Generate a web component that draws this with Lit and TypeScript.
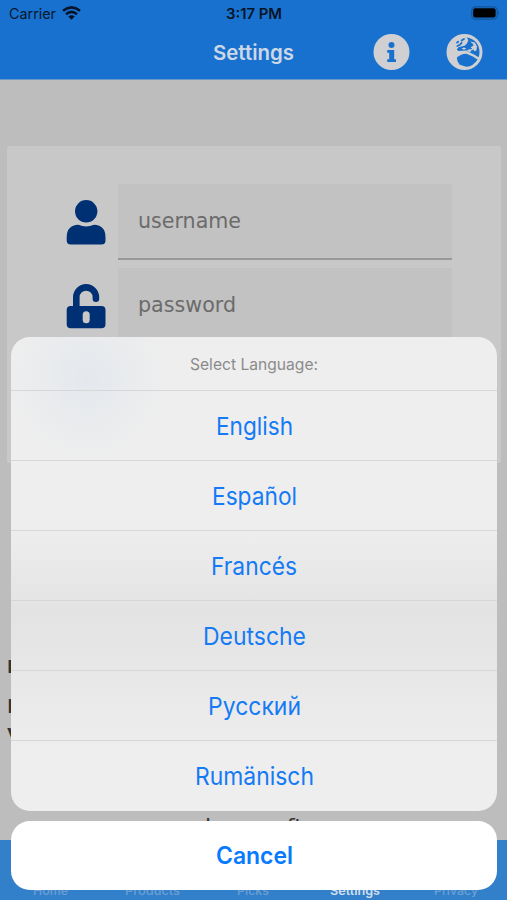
import { LitElement, html, css, svg } from "lit";
import { customElement } from "lit/decorators.js";

const LANGUAGES = [
  { label: "English", width: 77 },
  { label: "Español", width: 85 },
  { label: "Francés", width: 86 },
  { label: "Deutsche", width: 103 },
  { label: "Русский", width: 93 },
  { label: "Rumänisch", width: 119 },
];

const TABS = [
  { label: "Home", width: 35 },
  { label: "Products", width: 55 },
  { label: "Picks", width: 32 },
  { label: "Settings", width: 50 },
  { label: "Privacy", width: 44 },
];

// A run of text set to an exact advance width.
const fit = (text: string, width: number, size: number, weight = 400) => html`
  <svg class="fit" width=${width} height=${size * 1.4} aria-label=${text}>
    ${svg`<text x="0" y=${size * 1.06} font-size=${size} font-weight=${weight} textLength=${width} lengthAdjust="spacingAndGlyphs">${text}</text>`}
  </svg>`;

const fitStyles = css`
  .fit { display: block; overflow: visible; fill: currentColor; }
`;

@customElement("status-bar")
class StatusBar extends LitElement {
  static styles = [fitStyles, css`
    :host { display: grid; grid-template-columns: 1fr auto 1fr; align-items: center; height: 27px; padding: 0 6px 0 9px; color: #06182d; }
    .left { display: flex; align-items: center; gap: 6px; padding-top: 1px; }
    .left svg + svg { margin-bottom: 2px; }
    .right { display: flex; justify-content: flex-end; }
    .right svg { margin-top: -1px; }
    .time { color: #051427; padding-top: 1px; margin-left: -3px; }
  `];
  render() {
    return html`
      <div class="left">
        ${fit("Carrier", 47, 14.5)}
        <svg width="19" height="14" viewBox="0 0 19 14" fill="none" stroke="#051427">
          <path d="M1 4.8Q9.5 -2 18 4.8" stroke-width="2.6" />
          <path d="M4 8.2Q9.5 3.6 15 8.2" stroke-width="2.5" />
          <path d="M6.3 10.6Q9.5 7.9 12.7 10.6L9.5 13.8Z" fill="#051427" stroke="none" />
        </svg>
      </div>
      <div class="time">${fit("3:17 PM", 56, 14.2, 600)}</div>
      <div class="right">
        <svg width="30" height="14" viewBox="0 0 30 14">
          <rect x=".8" y=".8" width="25.4" height="12.4" rx="3.6" fill="none" stroke="#11549b" stroke-width="1.2" />
          <rect x="2.2" y="2.2" width="22.4" height="9.4" rx="2" fill="#000" />
          <path d="M27.4 4.8q2 2.1 0 4.2z" fill="#11549b" />
        </svg>
      </div>`;
  }
}

@customElement("title-bar")
class TitleBar extends LitElement {
  static styles = [fitStyles, css`
    :host { display: grid; grid-template-columns: 1fr auto 1fr; align-items: center; height: 50px; color: #ccd8e6; }
    .icons { display: flex; justify-content: flex-end; gap: 36px; padding-right: 24px; }
    .icons svg { display: block; }
  `];
  render() {
    return html`
      <span></span>
      ${fit("Settings", 81, 20.5, 600)}
      <div class="icons">
        <svg width="37" height="37" viewBox="0 0 37 37">
          <circle cx="18.5" cy="18" r="18" fill="#d0d0d2" />
          <circle cx="18.5" cy="11" r="3" fill="#1971cf" />
          <path d="M14.2 16h7v9.2h1.8v2.8h-8.8v-2.8h2v-6.4h-2z" fill="#1971cf" />
        </svg>
        <svg width="37" height="37" viewBox="0 0 37 37">
          <circle cx="18.5" cy="18" r="18" fill="#d0d0d2" />
          <path d="M20.5 3.6C28 4.4 33.5 10 33.5 18Q33.5 21 32.6 23.2L28 20.4L23.8 18.6L20 16.4L12.4 17L10.8 15.5L12.4 13.2L15.2 12.4L18.6 11.8L21 9.6L22.4 6Z" fill="#1971cf" />
          <path d="M24 7.4L28.8 8.6L31 12.6L30.4 16.6L27.8 17.2L28 15.4L25.4 16.2L24 18.6L20.4 16.2L23 15.6L26.4 15L24.6 13.2L27.6 11.6L26.6 9.4Z" fill="#d0d0d2" />
          <path d="M15.4 14.6L18 13.6L20.4 14.6L18 15.8Z" fill="#d0d0d2" />
          <path d="M10.8 23.6Q15 19.9 20.4 19.8L26.2 22.2L31.6 25.4Q27.6 32 20.4 32.8L17 31.8L13.4 30.4Q10.8 27.6 10.8 23.6Z" fill="#1971cf" />
          <path d="M11 8.6L12.2 7.6M15.6 6.6L18 4.9M11.4 12L13.8 10.8L15.6 8.8" stroke="#1971cf" stroke-width="1.8" stroke-linecap="round" fill="none" />
        </svg>
      </div>`;
  }
}

@customElement("login-card")
class LoginCard extends LitElement {
  static styles = [fitStyles, css`
    :host { display: flex; flex-direction: column; gap: 8px; box-sizing: border-box; height: 317px; margin: 67px 6px 0 7px; padding: 38px 49px 0 59px; background: #c8c8c8; border-radius: 2px; }
    .row { display: grid; grid-template-columns: 40px 334px; gap: 12px; align-items: center; height: 76px; }
    .icon { display: block; fill: #003074; margin-top: -1px; }
    .field { display: flex; align-items: center; box-sizing: border-box; height: 76px; padding: 0 20px 1px; background: #c2c2c2; border-bottom: 2px solid #989898; color: #6b6b6b; font-family: "DejaVu Sans", sans-serif; }
  `];
  render() {
    return html`
      <div class="row">
        <svg class="icon" width="40" height="46" viewBox="0 0 40 46">
          <circle cx="20.2" cy="12.3" r="11.2" />
          <path d="M12.4 25.8Q20 29 28 25.8Q39.5 26.3 39.5 38.3V41.5Q39.5 45.5 35.5 45.5H4.7Q.7 45.5 .7 41.5V38.3Q.7 26.3 12.4 25.8Z" />
        </svg>
        <div class="field">${fit("username", 103, 21.5)}</div>
      </div>
      <div class="row">
        <svg class="icon" width="40" height="46" viewBox="0 0 40 46">
          <path d="M10.3 25V14.2a9.8 9.8 0 0 1 19.6 0v1.6" fill="none" stroke="#003074" stroke-width="6.6" stroke-linecap="round" />
          <path fill-rule="evenodd" d="M4.7 23H35.5Q39.5 23 39.5 27V41.3Q39.5 45.3 35.5 45.3H4.7Q.7 45.3 .7 41.3V27Q.7 23 4.7 23ZM20.2 28.2a3.5 3.5 0 0 0-3.5 3.5v5a3.5 3.5 0 0 0 7 0v-5a3.5 3.5 0 0 0-3.5-3.5Z" />
        </svg>
        <div class="field">${fit("password", 98, 21.5)}</div>
      </div>`;
  }
}

@customElement("tab-bar")
class TabBar extends LitElement {
  static styles = [fitStyles, css`
    :host { display: grid; grid-template-columns: repeat(5, 1fr); align-items: end; height: 60px; background: #3380ca; color: #6b9fd3; }
    .tab { display: grid; justify-items: center; padding-bottom: 1px; }
    .active { color: #d2dfed; }
  `];
  render() {
    return TABS.map((t) => {
      const active = t.label === "Settings";
      return html`<div class="tab ${active ? "active" : ""}">${fit(t.label, t.width, 12, active ? 600 : 500)}</div>`;
    });
  }
}

@customElement("language-sheet")
class LanguageSheet extends LitElement {
  static styles = [fitStyles, css`
    :host { display: flex; flex-direction: column; gap: 10px; color: #147bf5; }
    .panel { box-sizing: border-box; height: 474px; border-radius: 19px; overflow: hidden; background: radial-gradient(ellipse 80px 85px at 76px 42px, #e4e8ed, #e4e8ed00), linear-gradient(#eee 0 190px, #e3e3e3 275px, #e7e7e7 330px, #eee 420px); }
    .title { display: grid; place-items: center; height: 53px; padding-top: 1px; box-sizing: border-box; color: #8b8b8b; }
    .item { display: grid; place-items: center; box-sizing: border-box; height: 70px; padding-top: 1px; border-top: 1px solid #d7d7d7; }
    .cancel { display: grid; place-items: center; box-sizing: border-box; height: 69px; padding-top: 1px; border-radius: 19px; background: #fff; color: #077aff; }
  `];
  render() {
    return html`
      <div class="panel">
        <div class="title">${fit("Select Language:", 128, 16)}</div>
        ${LANGUAGES.map((l) => html`<div class="item">${fit(l.label, l.width, 24.5)}</div>`)}
      </div>
      <div class="cancel">${fit("Cancel", 77, 24, 600)}</div>`;
  }
}

@customElement("app-root")
class AppRoot extends LitElement {
  static styles = [fitStyles, css`
    :host { display: block; position: relative; width: 507px; height: 900px; overflow: hidden; background: #bdbdbd; font-family: Inter, "Liberation Sans", sans-serif; }
    .page { display: flex; flex-direction: column; height: 900px; }
    .top { box-sizing: border-box; height: 80px; background: #1971cf; border-bottom: 1px solid #6a99c9; margin-bottom: -1px; }
    .copy { flex: 1; min-height: 0; box-sizing: border-box; display: flex; flex-direction: column; padding: 192px 7px 0; color: #333; font: bold 18px/24px "DejaVu Sans", sans-serif; }
    .line { flex: none; height: 24px; }
    .first { font-size: 17px; }
    .second { margin-top: 15px; font-size: 20px; }
    .third { margin-top: 2px; }
    .version { display: grid; justify-items: center; margin-top: 68px; font-weight: 400; }
    .sheet { position: absolute; left: 11px; right: 10px; top: 337px; }
  `];
  render() {
    return html`
      <div class="page">
        <div class="top">
          <status-bar></status-bar>
          <title-bar></title-bar>
        </div>
        <login-card></login-card>
        <div class="copy">
          <div class="line first">I</div>
          <div class="line second">I</div>
          <div class="line third">v</div>
          <div class="line version">${fit("bonasoft", 98, 20)}</div>
        </div>
        <tab-bar></tab-bar>
      </div>
      <language-sheet class="sheet"></language-sheet>`;
  }
}
